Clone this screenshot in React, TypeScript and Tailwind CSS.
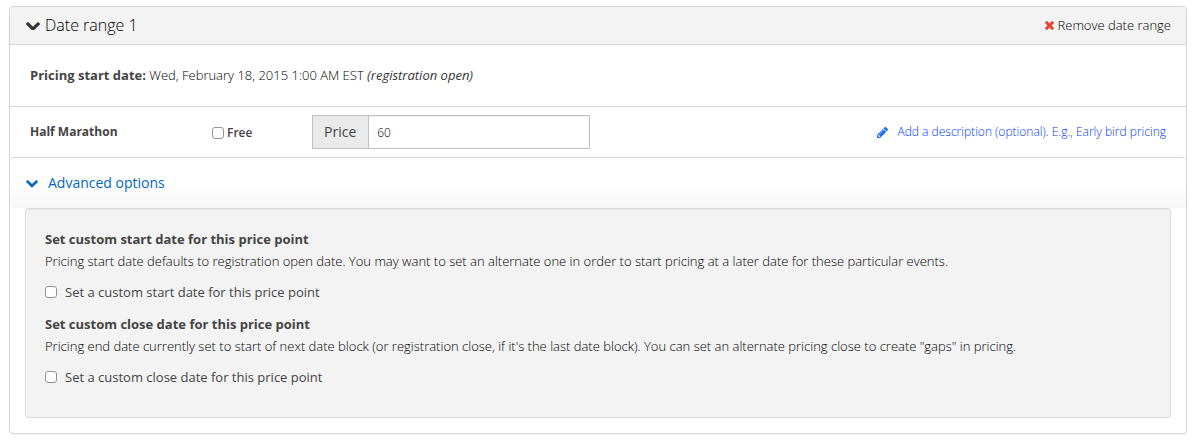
import { useState } from "react";

type IconProps = { className?: string };

function ChevronIcon({ className }: IconProps) {
  return (
    <svg viewBox="90 533 1612 1035" className={className} fill="currentColor" aria-hidden="true">
      <path d="M1683 808l-742 741q-19 19-45 19t-45-19l-742-741q-19-19-19-45.5t19-45.5l166-165q19-19 45-19t45 19l531 531 531-531q19-19 45-19t45 19l166 165q19 19 19 45.5t-19 45.5z" />
    </svg>
  );
}

function RemoveIcon({ className }: IconProps) {
  return (
    <svg viewBox="302 366 1188 1188" className={className} fill="currentColor" aria-hidden="true">
      <path d="M1490 1322q0 40-28 68l-136 136q-28 28-68 28t-68-28l-294-294-294 294q-28 28-68 28t-68-28l-136-136q-28-28-28-68t28-68l294-294-294-294q-28-28-28-68t28-68l136-136q28-28 68-28t68 28l294 294 294-294q28-28 68-28t68 28l136 136q28 28 28 68t-28 68l-294 294 294 294q28 28 28 68z" />
    </svg>
  );
}

function PencilIcon({ className }: IconProps) {
  return (
    <svg viewBox="128 149 1515 1515" className={className} fill="currentColor" aria-hidden="true">
      <path d="M491 1536l91-91-235-235-91 91v107h128v128h107zm523-928q0-22-22-22-10 0-17 7l-542 542q-7 7-7 17 0 22 22 22 10 0 17-7l542-542q7-7 7-17zm-54-192l416 416-832 832h-416v-416zm683 96q0 53-37 90l-166 166-416-416 166-165q36-38 90-38 53 0 91 38l235 234q37 39 37 91z" />
    </svg>
  );
}

const checkboxClass =
  "size-3 shrink-0 appearance-none rounded-[3px] border border-[#949494] bg-white checked:bg-[#0070c9]";

const customDates = [
  {
    id: "custom-start",
    title: "Set custom start date for this price point",
    text: "Pricing start date defaults to registration open date. You may want to set an alternate one in order to start pricing at a later date for these particular events.",
    label: "Set a custom start date for this price point",
  },
  {
    id: "custom-close",
    title: "Set custom close date for this price point",
    text: "Pricing end date currently set to start of next date block (or registration close, if it's the last date block). You can set an alternate pricing close to create \"gaps\" in pricing.",
    label: "Set a custom close date for this price point",
  },
];

export default function App() {
  const [price, setPrice] = useState("60");

  return (
    <main className="bg-white pt-1.5 pr-2.5 pb-2 pl-[9px] font-['Open_Sans',sans-serif] text-[13px] leading-5 text-[#444]">
      <section className="rounded border border-[#d5d5d5] pb-[15px] shadow-xs">
        {/* Header */}
        <header className="flex h-[38px] items-center justify-between rounded-t border-b border-[#d5d5d5] bg-[#f3f3f3] pr-[15px] pb-px pl-4 text-black">
          <button type="button" className="flex items-center gap-[5px] text-base font-light">
            <ChevronIcon className="mt-0.5 w-3.5 text-[#333]" />
            Date range 1
          </button>
          <button type="button" className="flex items-center gap-1 font-light">
            <RemoveIcon className="size-[9px] text-[#ea432f]" />
            Remove date range
          </button>
        </header>

        <p className="border-b border-[#d5d5d5] px-5 pt-5 pb-[21px] font-light text-black">
          <strong className="font-bold text-[#444]">Pricing start date:</strong> Wed, February 18, 2015 1:00 AM EST{" "}
          <em className="font-normal text-[#333]">(registration open)</em>
        </p>

        {/* Price row */}
        <div className="flex h-[50px] items-center px-5">
          <h3 className="w-[182px] text-xs leading-5 font-bold">Half Marathon</h3>
          <label className="flex w-[100px] items-center gap-[3px] pt-0.5 text-xs leading-5 font-semibold">
            <input type="checkbox" className={checkboxClass} />
            Free
          </label>
          <div className="flex h-[34px] w-[278px] border border-[#c0c0c0]">
            <label
              htmlFor="price"
              className="flex items-center border-r border-[#c0c0c0] bg-[#eaeaea] pr-3 pl-[11px] text-sm"
            >
              Price
            </label>
            <input
              id="price"
              type="text"
              value={price}
              onChange={(e) => setPrice(e.target.value)}
              className="min-w-0 flex-1 bg-white px-2 pt-0.5 text-xs font-light text-black inset-shadow-2xs outline-none"
            />
          </div>
          <a href="#description" className="ml-auto flex items-center gap-[9px] text-xs font-light text-[#0038ff]">
            <PencilIcon className="size-[11px] text-[#1a6df0]" />
            Add a description (optional). E.g., Early bird pricing
          </a>
        </div>

        {/* Advanced options */}
        <div className="flex h-[51px] items-center rounded border-t border-[#d5d5d5] bg-linear-to-b from-white from-50% to-[#f7f7f7] px-4">
          <button type="button" className="flex items-center gap-2.5 text-sm text-[#0066bf]">
            <ChevronIcon className="mt-0.5 w-3" />
            Advanced options
          </button>
        </div>

        <div className="mx-[15px] rounded-[3px] border border-[#dcdcdc] bg-[#f3f3f3] px-[19px] py-[19px] inset-shadow-2xs">
          {customDates.map((item) => (
            <div key={item.id} className="pb-[11px]">
              <h4 className="text-[13px] leading-[22px] font-bold">{item.title}</h4>
              <p className="mb-2.5 leading-[22px] font-light text-black">{item.text}</p>
              <label className="flex items-center gap-2">
                <input type="checkbox" className={checkboxClass} />
                {item.label}
              </label>
            </div>
          ))}
        </div>
      </section>
    </main>
  );
}
